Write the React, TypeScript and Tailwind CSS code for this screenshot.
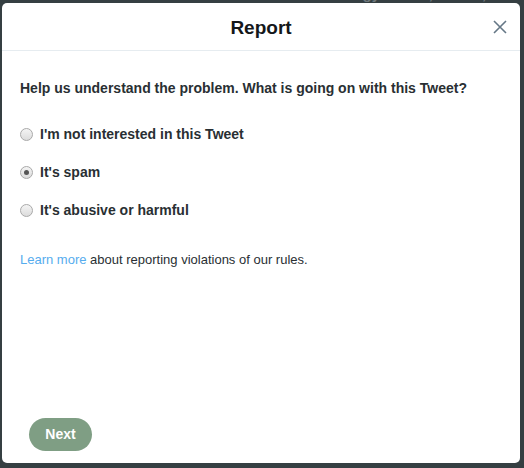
import React from "react";

type Option = { label: string; checked?: boolean };

const options: Option[] = [
  { label: "I'm not interested in this Tweet" },
  { label: "It's spam", checked: true },
  { label: "It's abusive or harmful" },
];

function Radio({ checked }: { checked?: boolean }) {
  return (
    <span className="relative flex h-[13px] w-[13px] shrink-0 items-center justify-center rounded-full border border-[#a9a9a9] bg-gradient-to-b from-[#f4f4f4] to-[#dcdcdc]">
      {checked && <span className="h-[5px] w-[5px] rounded-full bg-[#555]" />}
    </span>
  );
}

export default function App() {
  return (
    <div
      className="relative h-[468px] w-[524px] overflow-hidden bg-[#353f42]"
      style={{ fontFamily: '"Liberation Sans", Arial, sans-serif' }}
    >
      <div className="-mt-[15px] pl-[150px] text-[15px] leading-[18px] font-bold whitespace-nowrap text-[#6f787c]">
        ▪ #62 Podcast: What Technology Wants, Needs, Recommends
      </div>

      <div className="absolute left-[2px] top-[3px] flex h-[460px] w-[518px] flex-col rounded-[5px] bg-white">
        <div className="relative flex h-[48px] shrink-0 items-center justify-center border-b border-[#e6ecf0] pt-[4px]">
          <h1 className="text-[19px] font-bold text-[#14171a]">Report</h1>
          <button className="absolute right-[13px] top-[17px] text-[#657786]">
            <svg width="14" height="14" viewBox="0 0 14 14" fill="none" stroke="currentColor" strokeWidth="1.6">
              <path d="M1 1 L13 13 M13 1 L1 13" />
            </svg>
          </button>
        </div>

        <div className="flex flex-1 flex-col px-[18px] pt-[28px]">
          <p className="text-[14px] font-bold leading-[18px] text-[#292f33]">
            Help us understand the problem. What is going on with this Tweet?
          </p>

          <div className="mt-[28px] flex flex-col gap-[20px]">
            {options.map((o) => (
              <label key={o.label} className="flex h-[18px] items-center gap-[7px]">
                <Radio checked={o.checked} />
                <span className="text-[14px] font-bold text-[#292f33]">{o.label}</span>
              </label>
            ))}
          </div>

          <p className="mt-[32px] text-[13px] leading-[18px] text-[#292f33]">
            <a className="text-[#55acee]">Learn more</a> about reporting violations of our rules.
          </p>

          <div className="mt-auto pb-[12px] pl-[9px]">
            <button className="h-[33px] w-[63px] rounded-full bg-[#7f9e84] text-[14px] font-bold text-white">
              Next
            </button>
          </div>
        </div>
      </div>
    </div>
  );
}
